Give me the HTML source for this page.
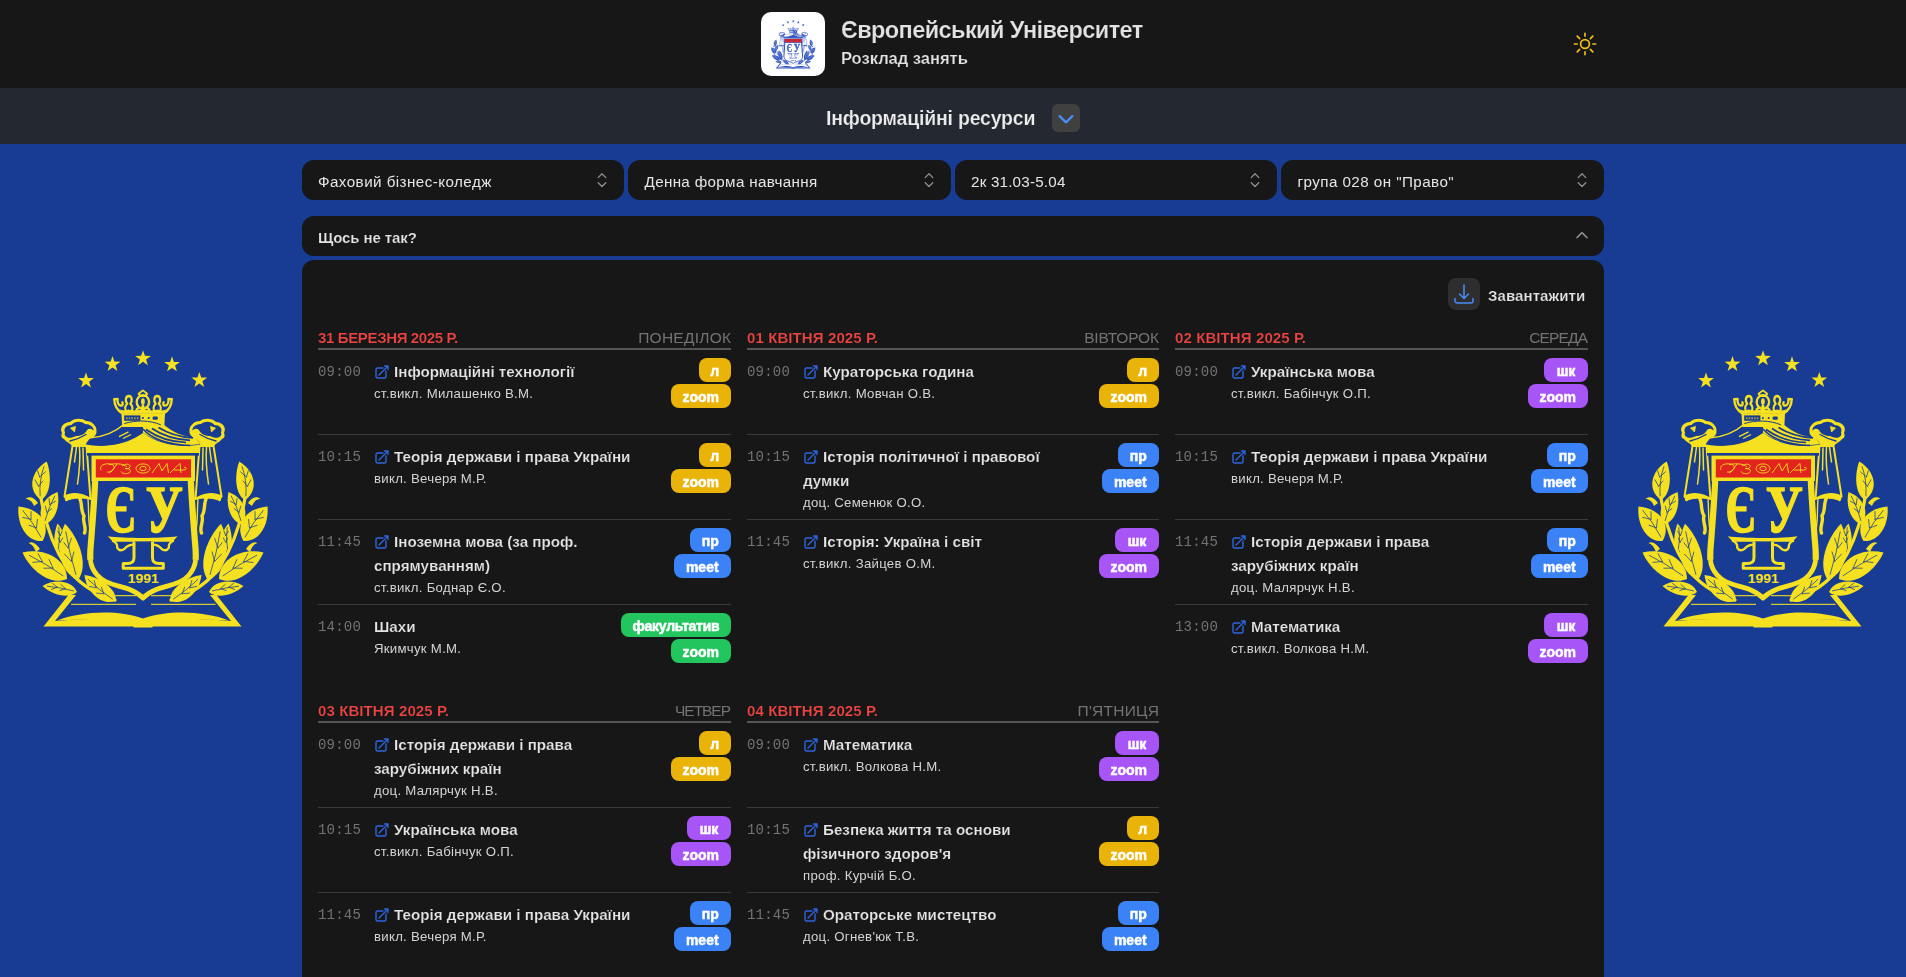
<!DOCTYPE html>
<html lang="uk">
<head>
<meta charset="utf-8">
<title>Розклад занять</title>
<style>
*{box-sizing:border-box}
html,body{margin:0;padding:0}
body{width:1906px;height:977px;overflow:hidden;position:relative;background:#183c93;font-family:"Liberation Sans",sans-serif;color:#e5e5e5}
.abs{position:absolute}
.day,.hdr,.sub,.sel,.acc,.dlt{will-change:transform}
.h1,.h2,.tt,.dt,.acc,.dlt{-webkit-text-stroke:0.2px #171717}
.subt{-webkit-text-stroke:0.2px #242831}
.hdr{position:absolute;left:0;top:0;width:1906px;height:88px;background:#171717}
.logo{position:absolute;left:761px;top:12px;width:64px;height:64px;border-radius:10px;background:#fff;overflow:hidden}
.h1{position:absolute;left:841px;top:14.6px;font-size:23.5px;line-height:30px;font-weight:bold;color:#e2e2e2;white-space:nowrap;letter-spacing:-0.58px}
.h2{position:absolute;left:841px;top:47px;font-size:16.6px;line-height:24px;font-weight:bold;color:#e2e2e2;white-space:nowrap;letter-spacing:-0.05px}
.sun{position:absolute;left:1571px;top:30px;width:28px;height:28px}
.sub{position:absolute;left:0;top:88px;width:1906px;height:56px;background:#242831}
.subt{position:absolute;left:826px;top:16.2px;font-size:19.5px;line-height:28px;font-weight:bold;color:#ececec;white-space:nowrap;letter-spacing:-0.2px}
.subb{position:absolute;left:1052px;top:16px;width:28px;height:28px;border-radius:6px;background:#404040}
.sel{position:absolute;top:160px;width:322.5px;height:40px;border-radius:12px;background:#171717;font-size:15.2px;line-height:43px;padding-left:16px;color:#e5e5e5;white-space:nowrap;letter-spacing:0.44px;overflow:hidden}
.sel svg{position:absolute;right:14px;top:12px}
.acc{position:absolute;left:302px;top:216px;width:1302px;height:40px;border-radius:12px;background:#171717;font-size:15px;line-height:43.4px;padding-left:16px;font-weight:bold;color:#e5e5e5;letter-spacing:-0.1px;overflow:hidden}
.acc svg{position:absolute;right:14px;top:12px}
.main{position:absolute;left:302px;top:260px;width:1302px;height:730px;border-radius:12px 12px 0 0;background:#171717}
.dl{position:absolute;left:1448px;top:278px;width:32px;height:32px;border-radius:8px;background:#2e2e30}
.dlt{position:absolute;left:1488px;top:285.7px;letter-spacing:0.1px;font-size:15px;line-height:20px;font-weight:bold;color:#e5e5e5;white-space:nowrap}
.day{position:absolute}
.dh{height:26px;border-bottom:2px solid #555;display:flex;justify-content:space-between;align-items:flex-start;font-size:15px;line-height:24px;white-space:nowrap;padding-top:1.5px}
.dt{color:#ef4444;font-weight:bold;letter-spacing:-0.36px}
.dn{color:#737373;font-size:15.5px;letter-spacing:0.25px;margin-right:-0.25px}
.row{position:relative;height:85px;border-bottom:1px solid #3a3a3a}
.row:last-child{border-bottom:none}
.tm{position:absolute;left:0;top:10px;font-family:"Liberation Mono",monospace;font-size:14px;line-height:24px;color:#737373;letter-spacing:0.2px}
.tx{position:absolute;left:56px;top:9.6px;white-space:nowrap}
.tt{font-size:15.2px;line-height:24px;font-weight:bold;color:#e5e5e5;letter-spacing:0px}
.lk{display:inline-block;vertical-align:-3.4px;margin-right:4px}
.tc{font-size:13.2px;line-height:20px;color:#d4d4d4;letter-spacing:0.28px}
.bd{position:absolute;right:0;top:8px;display:flex;flex-direction:column;align-items:flex-end;gap:2px}
.bg{display:block;height:24px;border-radius:8px;text-align:center;font-size:14px;line-height:26.4px;font-weight:bold;color:#fff;white-space:nowrap;overflow:hidden;-webkit-text-stroke:0.5px #fff}
.w-f{letter-spacing:-0.25px}.w-l{width:32.5px}.w-z{width:60.5px}.w-p{width:41.5px}.w-m{width:57.5px}.w-s{width:44px}.w-f{width:110px}
.y{background:#eab308}.b{background:#3b82f6}.p{background:#a855f7}.g{background:#22c55e}
.emb{position:absolute}
</style>
</head>
<body>
<div class="hdr">
  <div class="logo"><svg style="position:absolute;left:6.76px;top:6px" width="51.2" height="52.95"><use href="#emb2"/></svg></div>
  <div class="h1">Європейський Університет</div>
  <div class="h2">Розклад занять</div>
  <svg class="sun" viewBox="-14 -14 28 28"><g fill="none" stroke="#eebf1c" stroke-width="1.7" stroke-linecap="round"><circle r="4.4"/><path d="M0-7.9V-10.6M0 7.9V10.6M-7.9 0H-10.6M7.9 0H10.6M5.37-5.37L7.78-7.78M-5.37-5.37L-7.78-7.78M5.37 5.37L7.78 7.78M-5.37 5.37L-7.78 7.78"/></g></svg>
</div>
<div class="sub">
  <div class="subt">Інформаційні ресурси</div>
  <div class="subb"><svg width="28" height="28" viewBox="0 0 28 28"><path d="M7.6 12.1L14 18.4L20.4 12.1" fill="none" stroke="#4a8ff7" stroke-width="2.2" stroke-linecap="round" stroke-linejoin="round"/></svg></div>
</div>
<div class="sel" style="left:302px;width:322px">Фаховий бізнес-коледж<svg width="16" height="16" viewBox="0 0 16 16"><path d="M4.2 5.6L8 1.8L11.8 5.6M4.2 10.7L8 14.5L11.8 10.7" fill="none" stroke="#8f8f8f" stroke-width="1.3" stroke-linecap="round" stroke-linejoin="round"/></svg></div>
<div class="sel" style="left:628px;width:323px;letter-spacing:0.34px;padding-left:16.5px">Денна форма навчання<svg width="16" height="16" viewBox="0 0 16 16"><path d="M4.2 5.6L8 1.8L11.8 5.6M4.2 10.7L8 14.5L11.8 10.7" fill="none" stroke="#8f8f8f" stroke-width="1.3" stroke-linecap="round" stroke-linejoin="round"/></svg></div>
<div class="sel" style="left:955px;width:322px;letter-spacing:0.2px">2к 31.03-5.04<svg width="16" height="16" viewBox="0 0 16 16"><path d="M4.2 5.6L8 1.8L11.8 5.6M4.2 10.7L8 14.5L11.8 10.7" fill="none" stroke="#8f8f8f" stroke-width="1.3" stroke-linecap="round" stroke-linejoin="round"/></svg></div>
<div class="sel" style="left:1281px;width:323px;padding-left:16.5px">група 028 он "Право"<svg width="16" height="16" viewBox="0 0 16 16"><path d="M4.2 5.6L8 1.8L11.8 5.6M4.2 10.7L8 14.5L11.8 10.7" fill="none" stroke="#8f8f8f" stroke-width="1.3" stroke-linecap="round" stroke-linejoin="round"/></svg></div>
<div class="acc">Щось не так?<svg width="16" height="16" viewBox="0 0 16 16"><path d="M3 9.6L8 4.6L13 9.6" fill="none" stroke="#8a8a8a" stroke-width="1.5" stroke-linecap="round" stroke-linejoin="round"/></svg></div>
<div class="main"></div>
<div class="dl"><svg width="32" height="32" viewBox="-4 -4 32 32"><path d="M3 16.5v2.25A2.25 2.25 0 0 0 5.25 21h13.5A2.25 2.25 0 0 0 21 18.75V16.5M16.5 12L12 16.5m0 0L7.5 12m4.5 4.5V3" fill="none" stroke="#4a8df6" stroke-width="1.5" stroke-linecap="round" stroke-linejoin="round"/></svg></div>
<div class="dlt">Завантажити</div>
<div class="day" style="left:318px;top:324px;width:413px">
<div class="dh"><span class="dt" style="letter-spacing:-0.36px">31 БЕРЕЗНЯ 2025 Р.</span><span class="dn" style="letter-spacing:0.25px;margin-right:-0.25px">ПОНЕДІЛОК</span></div>
<div class="row"><span class="tm">09:00</span><div class="tx"><div class="tt"><svg class="lk" viewBox="0 0 24 24" width="16" height="16"><path d="M13.5 6H5.25A2.25 2.25 0 0 0 3 8.25v10.5A2.25 2.25 0 0 0 5.25 21h10.5A2.25 2.25 0 0 0 18 18.75V10.5m-10.5 6L21 3m0 0h-5.25M21 3v5.25" fill="none" stroke="#2f64e0" stroke-width="2.1" stroke-linecap="round" stroke-linejoin="round"/></svg><span class="tl">Інформаційні технології</span></div><div class="tc">ст.викл. Милашенко В.М.</div></div><div class="bd"><span class="bg y w-l">л</span><span class="bg y w-z">zoom</span></div></div>
<div class="row"><span class="tm">10:15</span><div class="tx"><div class="tt"><svg class="lk" viewBox="0 0 24 24" width="16" height="16"><path d="M13.5 6H5.25A2.25 2.25 0 0 0 3 8.25v10.5A2.25 2.25 0 0 0 5.25 21h10.5A2.25 2.25 0 0 0 18 18.75V10.5m-10.5 6L21 3m0 0h-5.25M21 3v5.25" fill="none" stroke="#2f64e0" stroke-width="2.1" stroke-linecap="round" stroke-linejoin="round"/></svg><span class="tl">Теорія держави і права України</span></div><div class="tc">викл. Вечеря М.Р.</div></div><div class="bd"><span class="bg y w-l">л</span><span class="bg y w-z">zoom</span></div></div>
<div class="row"><span class="tm">11:45</span><div class="tx"><div class="tt"><svg class="lk" viewBox="0 0 24 24" width="16" height="16"><path d="M13.5 6H5.25A2.25 2.25 0 0 0 3 8.25v10.5A2.25 2.25 0 0 0 5.25 21h10.5A2.25 2.25 0 0 0 18 18.75V10.5m-10.5 6L21 3m0 0h-5.25M21 3v5.25" fill="none" stroke="#2f64e0" stroke-width="2.1" stroke-linecap="round" stroke-linejoin="round"/></svg><span class="tl">Іноземна мова (за проф.<br>спрямуванням)</span></div><div class="tc">ст.викл. Боднар Є.О.</div></div><div class="bd"><span class="bg b w-p">пр</span><span class="bg b w-m">meet</span></div></div>
<div class="row"><span class="tm">14:00</span><div class="tx"><div class="tt"><span class="tl">Шахи</span></div><div class="tc">Якимчук М.М.</div></div><div class="bd"><span class="bg g w-f">факультатив</span><span class="bg g w-z">zoom</span></div></div>
</div>
<div class="day" style="left:747px;top:324px;width:412px">
<div class="dh"><span class="dt" style="letter-spacing:0.10px">01 КВІТНЯ 2025 Р.</span><span class="dn" style="letter-spacing:-0.14px;margin-right:0.14px">ВІВТОРОК</span></div>
<div class="row"><span class="tm">09:00</span><div class="tx"><div class="tt"><svg class="lk" viewBox="0 0 24 24" width="16" height="16"><path d="M13.5 6H5.25A2.25 2.25 0 0 0 3 8.25v10.5A2.25 2.25 0 0 0 5.25 21h10.5A2.25 2.25 0 0 0 18 18.75V10.5m-10.5 6L21 3m0 0h-5.25M21 3v5.25" fill="none" stroke="#2f64e0" stroke-width="2.1" stroke-linecap="round" stroke-linejoin="round"/></svg><span class="tl">Кураторська година</span></div><div class="tc">ст.викл. Мовчан О.В.</div></div><div class="bd"><span class="bg y w-l">л</span><span class="bg y w-z">zoom</span></div></div>
<div class="row"><span class="tm">10:15</span><div class="tx"><div class="tt"><svg class="lk" viewBox="0 0 24 24" width="16" height="16"><path d="M13.5 6H5.25A2.25 2.25 0 0 0 3 8.25v10.5A2.25 2.25 0 0 0 5.25 21h10.5A2.25 2.25 0 0 0 18 18.75V10.5m-10.5 6L21 3m0 0h-5.25M21 3v5.25" fill="none" stroke="#2f64e0" stroke-width="2.1" stroke-linecap="round" stroke-linejoin="round"/></svg><span class="tl">Історія політичної і правової<br>думки</span></div><div class="tc">доц. Семенюк О.О.</div></div><div class="bd"><span class="bg b w-p">пр</span><span class="bg b w-m">meet</span></div></div>
<div class="row"><span class="tm">11:45</span><div class="tx"><div class="tt"><svg class="lk" viewBox="0 0 24 24" width="16" height="16"><path d="M13.5 6H5.25A2.25 2.25 0 0 0 3 8.25v10.5A2.25 2.25 0 0 0 5.25 21h10.5A2.25 2.25 0 0 0 18 18.75V10.5m-10.5 6L21 3m0 0h-5.25M21 3v5.25" fill="none" stroke="#2f64e0" stroke-width="2.1" stroke-linecap="round" stroke-linejoin="round"/></svg><span class="tl">Історія: Україна і світ</span></div><div class="tc">ст.викл. Зайцев О.М.</div></div><div class="bd"><span class="bg p w-s">шк</span><span class="bg p w-z">zoom</span></div></div>
</div>
<div class="day" style="left:1175px;top:324px;width:413px">
<div class="dh"><span class="dt" style="letter-spacing:0.10px">02 КВІТНЯ 2025 Р.</span><span class="dn" style="letter-spacing:-0.85px;margin-right:0.85px">СЕРЕДА</span></div>
<div class="row"><span class="tm">09:00</span><div class="tx"><div class="tt"><svg class="lk" viewBox="0 0 24 24" width="16" height="16"><path d="M13.5 6H5.25A2.25 2.25 0 0 0 3 8.25v10.5A2.25 2.25 0 0 0 5.25 21h10.5A2.25 2.25 0 0 0 18 18.75V10.5m-10.5 6L21 3m0 0h-5.25M21 3v5.25" fill="none" stroke="#2f64e0" stroke-width="2.1" stroke-linecap="round" stroke-linejoin="round"/></svg><span class="tl">Українська мова</span></div><div class="tc">ст.викл. Бабінчук О.П.</div></div><div class="bd"><span class="bg p w-s">шк</span><span class="bg p w-z">zoom</span></div></div>
<div class="row"><span class="tm">10:15</span><div class="tx"><div class="tt"><svg class="lk" viewBox="0 0 24 24" width="16" height="16"><path d="M13.5 6H5.25A2.25 2.25 0 0 0 3 8.25v10.5A2.25 2.25 0 0 0 5.25 21h10.5A2.25 2.25 0 0 0 18 18.75V10.5m-10.5 6L21 3m0 0h-5.25M21 3v5.25" fill="none" stroke="#2f64e0" stroke-width="2.1" stroke-linecap="round" stroke-linejoin="round"/></svg><span class="tl">Теорія держави і права України</span></div><div class="tc">викл. Вечеря М.Р.</div></div><div class="bd"><span class="bg b w-p">пр</span><span class="bg b w-m">meet</span></div></div>
<div class="row"><span class="tm">11:45</span><div class="tx"><div class="tt"><svg class="lk" viewBox="0 0 24 24" width="16" height="16"><path d="M13.5 6H5.25A2.25 2.25 0 0 0 3 8.25v10.5A2.25 2.25 0 0 0 5.25 21h10.5A2.25 2.25 0 0 0 18 18.75V10.5m-10.5 6L21 3m0 0h-5.25M21 3v5.25" fill="none" stroke="#2f64e0" stroke-width="2.1" stroke-linecap="round" stroke-linejoin="round"/></svg><span class="tl">Історія держави і права<br>зарубіжних країн</span></div><div class="tc">доц. Малярчук Н.В.</div></div><div class="bd"><span class="bg b w-p">пр</span><span class="bg b w-m">meet</span></div></div>
<div class="row"><span class="tm">13:00</span><div class="tx"><div class="tt"><svg class="lk" viewBox="0 0 24 24" width="16" height="16"><path d="M13.5 6H5.25A2.25 2.25 0 0 0 3 8.25v10.5A2.25 2.25 0 0 0 5.25 21h10.5A2.25 2.25 0 0 0 18 18.75V10.5m-10.5 6L21 3m0 0h-5.25M21 3v5.25" fill="none" stroke="#2f64e0" stroke-width="2.1" stroke-linecap="round" stroke-linejoin="round"/></svg><span class="tl">Математика</span></div><div class="tc">ст.викл. Волкова Н.М.</div></div><div class="bd"><span class="bg p w-s">шк</span><span class="bg p w-z">zoom</span></div></div>
</div>
<div class="day" style="left:318px;top:697px;width:413px">
<div class="dh"><span class="dt" style="letter-spacing:0.10px">03 КВІТНЯ 2025 Р.</span><span class="dn" style="letter-spacing:-1.05px;margin-right:1.05px">ЧЕТВЕР</span></div>
<div class="row"><span class="tm">09:00</span><div class="tx"><div class="tt"><svg class="lk" viewBox="0 0 24 24" width="16" height="16"><path d="M13.5 6H5.25A2.25 2.25 0 0 0 3 8.25v10.5A2.25 2.25 0 0 0 5.25 21h10.5A2.25 2.25 0 0 0 18 18.75V10.5m-10.5 6L21 3m0 0h-5.25M21 3v5.25" fill="none" stroke="#2f64e0" stroke-width="2.1" stroke-linecap="round" stroke-linejoin="round"/></svg><span class="tl">Історія держави і права<br>зарубіжних країн</span></div><div class="tc">доц. Малярчук Н.В.</div></div><div class="bd"><span class="bg y w-l">л</span><span class="bg y w-z">zoom</span></div></div>
<div class="row"><span class="tm">10:15</span><div class="tx"><div class="tt"><svg class="lk" viewBox="0 0 24 24" width="16" height="16"><path d="M13.5 6H5.25A2.25 2.25 0 0 0 3 8.25v10.5A2.25 2.25 0 0 0 5.25 21h10.5A2.25 2.25 0 0 0 18 18.75V10.5m-10.5 6L21 3m0 0h-5.25M21 3v5.25" fill="none" stroke="#2f64e0" stroke-width="2.1" stroke-linecap="round" stroke-linejoin="round"/></svg><span class="tl">Українська мова</span></div><div class="tc">ст.викл. Бабінчук О.П.</div></div><div class="bd"><span class="bg p w-s">шк</span><span class="bg p w-z">zoom</span></div></div>
<div class="row"><span class="tm">11:45</span><div class="tx"><div class="tt"><svg class="lk" viewBox="0 0 24 24" width="16" height="16"><path d="M13.5 6H5.25A2.25 2.25 0 0 0 3 8.25v10.5A2.25 2.25 0 0 0 5.25 21h10.5A2.25 2.25 0 0 0 18 18.75V10.5m-10.5 6L21 3m0 0h-5.25M21 3v5.25" fill="none" stroke="#2f64e0" stroke-width="2.1" stroke-linecap="round" stroke-linejoin="round"/></svg><span class="tl">Теорія держави і права України</span></div><div class="tc">викл. Вечеря М.Р.</div></div><div class="bd"><span class="bg b w-p">пр</span><span class="bg b w-m">meet</span></div></div>
</div>
<div class="day" style="left:747px;top:697px;width:412px">
<div class="dh"><span class="dt" style="letter-spacing:0.10px">04 КВІТНЯ 2025 Р.</span><span class="dn" style="letter-spacing:0.25px;margin-right:-0.25px">П'ЯТНИЦЯ</span></div>
<div class="row"><span class="tm">09:00</span><div class="tx"><div class="tt"><svg class="lk" viewBox="0 0 24 24" width="16" height="16"><path d="M13.5 6H5.25A2.25 2.25 0 0 0 3 8.25v10.5A2.25 2.25 0 0 0 5.25 21h10.5A2.25 2.25 0 0 0 18 18.75V10.5m-10.5 6L21 3m0 0h-5.25M21 3v5.25" fill="none" stroke="#2f64e0" stroke-width="2.1" stroke-linecap="round" stroke-linejoin="round"/></svg><span class="tl">Математика</span></div><div class="tc">ст.викл. Волкова Н.М.</div></div><div class="bd"><span class="bg p w-s">шк</span><span class="bg p w-z">zoom</span></div></div>
<div class="row"><span class="tm">10:15</span><div class="tx"><div class="tt"><svg class="lk" viewBox="0 0 24 24" width="16" height="16"><path d="M13.5 6H5.25A2.25 2.25 0 0 0 3 8.25v10.5A2.25 2.25 0 0 0 5.25 21h10.5A2.25 2.25 0 0 0 18 18.75V10.5m-10.5 6L21 3m0 0h-5.25M21 3v5.25" fill="none" stroke="#2f64e0" stroke-width="2.1" stroke-linecap="round" stroke-linejoin="round"/></svg><span class="tl">Безпека життя та основи<br>фізичного здоров'я</span></div><div class="tc">проф. Курчій Б.О.</div></div><div class="bd"><span class="bg y w-l">л</span><span class="bg y w-z">zoom</span></div></div>
<div class="row"><span class="tm">11:45</span><div class="tx"><div class="tt"><svg class="lk" viewBox="0 0 24 24" width="16" height="16"><path d="M13.5 6H5.25A2.25 2.25 0 0 0 3 8.25v10.5A2.25 2.25 0 0 0 5.25 21h10.5A2.25 2.25 0 0 0 18 18.75V10.5m-10.5 6L21 3m0 0h-5.25M21 3v5.25" fill="none" stroke="#2f64e0" stroke-width="2.1" stroke-linecap="round" stroke-linejoin="round"/></svg><span class="tl">Ораторське мистецтво</span></div><div class="tc">доц. Огнев'юк Т.В.</div></div><div class="bd"><span class="bg b w-p">пр</span><span class="bg b w-m">meet</span></div></div>
</div>
<svg width="0" height="0" style="position:absolute"><symbol id="emb" viewBox="0 340 290 300"><g fill="#f5e11f"><polygon points="86.0,372.4 87.9,378.0 93.9,378.1 89.1,381.7 90.9,387.4 86.0,384.0 81.1,387.4 82.9,381.7 78.1,378.1 84.1,378.0"/><polygon points="112.5,356.0 114.4,361.6 120.4,361.7 115.6,365.3 117.4,371.0 112.5,367.6 107.6,371.0 109.4,365.3 104.6,361.7 110.6,361.6"/><polygon points="143.0,350.2 144.9,355.8 150.9,355.9 146.1,359.5 147.9,365.2 143.0,361.8 138.1,365.2 139.9,359.5 135.1,355.9 141.1,355.8"/><polygon points="172.0,356.3 173.9,361.9 179.9,362.0 175.1,365.6 176.9,371.3 172.0,367.9 167.1,371.3 168.9,365.6 164.1,362.0 170.1,361.9"/><polygon points="199.3,371.9 201.2,377.5 207.2,377.6 202.4,381.2 204.2,386.9 199.3,383.5 194.4,386.9 196.2,381.2 191.4,377.6 197.4,377.5"/><path d="M115,600 C95,594 78,584 66,566 C54,548 46,528 41,498" fill="none" stroke="#f5e11f" stroke-width="3.2" stroke-linecap="round"/><path d="M41.0,500.0 C51.7,493.7 51.4,474.0 46.8,461.5 C30.7,470.9 26.8,490.0 41.0,500.0Z"/><path d="M40.1,495.9 Q39.0,480.0 43.9,466.6 M38.6,486.3 L42.8,481.0 M38.6,486.3 L35.0,479.8 M39.6,476.9 L45.4,471.9 M39.6,476.9 L37.6,470.7" fill="none" stroke="#183c93" stroke-width="0.75" stroke-linecap="round"/><path d="M44.5,524.0 C56.1,521.3 60.3,504.3 57.5,492.0 C43.1,497.3 35.4,512.8 44.5,524.0Z"/><path d="M45.1,520.5 Q48.7,507.1 54.7,496.1 M46.9,512.3 L51.8,508.7 M46.9,512.3 L45.3,506.1 M49.8,504.5 L55.5,501.3 M49.8,504.5 L49.0,498.6" fill="none" stroke="#183c93" stroke-width="0.75" stroke-linecap="round"/><path d="M42.5,541.0 C52.4,523.9 38.6,507.8 18.5,506.5 C16.7,523.1 25.9,542.3 42.5,541.0Z"/><path d="M40.9,537.0 Q33.0,522.0 22.9,510.6 M36.5,527.8 L37.4,519.5 M36.5,527.8 L29.0,525.3 M31.0,519.3 L31.0,511.6 M31.0,519.3 L22.7,517.4" fill="none" stroke="#183c93" stroke-width="0.75" stroke-linecap="round"/><path d="M78.0,580.0 C89.0,565.6 79.4,538.2 65.0,523.7 C54.5,543.9 59.0,572.5 78.0,580.0Z"/><path d="M75.9,574.5 Q69.1,552.4 65.8,531.8 M71.4,561.4 L73.9,551.9 M71.4,561.4 L64.5,554.1 M68.1,547.9 L71.4,538.2 M68.1,547.9 L62.0,540.4" fill="none" stroke="#183c93" stroke-width="0.75" stroke-linecap="round"/><path d="M57.5,552.0 C66.3,546.3 65.7,532.0 57.5,523.5 C54.1,532.0 52.3,546.3 57.5,552.0Z"/><path d="M58.4,549.1 Q60.5,537.8 58.8,527.5 M60.1,542.3 L62.7,538.0 M60.1,542.3 L58.3,538.0 M60.4,535.5 L62.0,531.2 M60.4,535.5 L57.6,531.2" fill="none" stroke="#183c93" stroke-width="0.75" stroke-linecap="round"/><path d="M67.0,579.0 C67.1,558.6 43.7,547.3 22.5,552.5 C30.1,570.2 50.6,586.3 67.0,579.0Z"/><path d="M62.9,575.7 Q46.0,563.6 29.3,555.3 M53.0,568.1 L49.1,559.5 M53.0,568.1 L43.9,568.2 M42.4,561.5 L38.1,553.7 M42.4,561.5 L32.9,562.4" fill="none" stroke="#183c93" stroke-width="0.75" stroke-linecap="round"/><path d="M77.0,592.0 C71.9,580.3 54.4,578.6 42.5,586.0 C51.7,594.6 68.6,599.6 77.0,592.0Z"/><path d="M73.6,590.9 Q60.0,587.5 47.4,586.2 M65.5,588.7 L60.9,584.5 M65.5,588.7 L59.8,590.6 M57.2,587.1 L52.5,583.5 M57.2,587.1 L51.5,589.5" fill="none" stroke="#183c93" stroke-width="0.75" stroke-linecap="round"/><path d="M116.0,601.0 C116.3,587.8 98.9,576.8 84.5,575.0 C86.4,592.0 101.2,606.1 116.0,601.0Z"/><path d="M112.4,599.0 Q98.7,589.9 88.2,579.5 M103.9,593.8 L101.4,587.3 M103.9,593.8 L96.6,593.1 M96.2,587.8 L94.2,580.6 M96.2,587.8 L89.4,586.4" fill="none" stroke="#183c93" stroke-width="0.75" stroke-linecap="round"/><path d="M38,503 C34,497 29,496 25.5,499 C29,499 32,501 34,506Z"/><path d="M40,549 C36,543 32,541 28.5,543 C32,544 34,547 36,552Z"/><g transform="translate(286,0) scale(-1,1)"><path d="M115,600 C95,594 78,584 66,566 C54,548 46,528 41,498" fill="none" stroke="#f5e11f" stroke-width="3.2" stroke-linecap="round"/><path d="M41.0,500.0 C51.7,493.7 51.4,474.0 46.8,461.5 C30.7,470.9 26.8,490.0 41.0,500.0Z"/><path d="M40.1,495.9 Q39.0,480.0 43.9,466.6 M38.6,486.3 L42.8,481.0 M38.6,486.3 L35.0,479.8 M39.6,476.9 L45.4,471.9 M39.6,476.9 L37.6,470.7" fill="none" stroke="#183c93" stroke-width="0.75" stroke-linecap="round"/><path d="M44.5,524.0 C56.1,521.3 60.3,504.3 57.5,492.0 C43.1,497.3 35.4,512.8 44.5,524.0Z"/><path d="M45.1,520.5 Q48.7,507.1 54.7,496.1 M46.9,512.3 L51.8,508.7 M46.9,512.3 L45.3,506.1 M49.8,504.5 L55.5,501.3 M49.8,504.5 L49.0,498.6" fill="none" stroke="#183c93" stroke-width="0.75" stroke-linecap="round"/><path d="M42.5,541.0 C52.4,523.9 38.6,507.8 18.5,506.5 C16.7,523.1 25.9,542.3 42.5,541.0Z"/><path d="M40.9,537.0 Q33.0,522.0 22.9,510.6 M36.5,527.8 L37.4,519.5 M36.5,527.8 L29.0,525.3 M31.0,519.3 L31.0,511.6 M31.0,519.3 L22.7,517.4" fill="none" stroke="#183c93" stroke-width="0.75" stroke-linecap="round"/><path d="M78.0,580.0 C89.0,565.6 79.4,538.2 65.0,523.7 C54.5,543.9 59.0,572.5 78.0,580.0Z"/><path d="M75.9,574.5 Q69.1,552.4 65.8,531.8 M71.4,561.4 L73.9,551.9 M71.4,561.4 L64.5,554.1 M68.1,547.9 L71.4,538.2 M68.1,547.9 L62.0,540.4" fill="none" stroke="#183c93" stroke-width="0.75" stroke-linecap="round"/><path d="M57.5,552.0 C66.3,546.3 65.7,532.0 57.5,523.5 C54.1,532.0 52.3,546.3 57.5,552.0Z"/><path d="M58.4,549.1 Q60.5,537.8 58.8,527.5 M60.1,542.3 L62.7,538.0 M60.1,542.3 L58.3,538.0 M60.4,535.5 L62.0,531.2 M60.4,535.5 L57.6,531.2" fill="none" stroke="#183c93" stroke-width="0.75" stroke-linecap="round"/><path d="M67.0,579.0 C67.1,558.6 43.7,547.3 22.5,552.5 C30.1,570.2 50.6,586.3 67.0,579.0Z"/><path d="M62.9,575.7 Q46.0,563.6 29.3,555.3 M53.0,568.1 L49.1,559.5 M53.0,568.1 L43.9,568.2 M42.4,561.5 L38.1,553.7 M42.4,561.5 L32.9,562.4" fill="none" stroke="#183c93" stroke-width="0.75" stroke-linecap="round"/><path d="M77.0,592.0 C71.9,580.3 54.4,578.6 42.5,586.0 C51.7,594.6 68.6,599.6 77.0,592.0Z"/><path d="M73.6,590.9 Q60.0,587.5 47.4,586.2 M65.5,588.7 L60.9,584.5 M65.5,588.7 L59.8,590.6 M57.2,587.1 L52.5,583.5 M57.2,587.1 L51.5,589.5" fill="none" stroke="#183c93" stroke-width="0.75" stroke-linecap="round"/><path d="M116.0,601.0 C116.3,587.8 98.9,576.8 84.5,575.0 C86.4,592.0 101.2,606.1 116.0,601.0Z"/><path d="M112.4,599.0 Q98.7,589.9 88.2,579.5 M103.9,593.8 L101.4,587.3 M103.9,593.8 L96.6,593.1 M96.2,587.8 L94.2,580.6 M96.2,587.8 L89.4,586.4" fill="none" stroke="#183c93" stroke-width="0.75" stroke-linecap="round"/><path d="M38,503 C34,497 29,496 25.5,499 C29,499 32,501 34,506Z"/><path d="M40,549 C36,543 32,541 28.5,543 C32,544 34,547 36,552Z"/></g><path d="M68.5,595 L43.5,626.6 L133.5,626.6 L133.5,627.4 L152.5,627.4 L152.5,626.6 L241.5,626.6 L216.5,595 L210,595 L231,621 C200,619 170,617 143,620.5 C116,617 86,619 55,621 L76,595Z"/><path d="M57,620.5 C80,612 115,609 143,618.5 C171,609 206,612 229,620.5 C200,619 168,618 143,622 C118,618 86,619 57,620.5Z"/><path d="M71,604.4 H136 M151,604.4 H215.5 M113,595.6 H136 M151,595.6 H172" stroke="#f5e11f" stroke-opacity="0.85" stroke-width="1.3" fill="none"/><path d="M62,433 C59,427 64,422 70,422 C74,418 82,418 86,421 C92,421 97,426 96.5,431 C97,435 93,438 90,438.5 C88,441 86,443 85,446 L72,446 C70,443 66,442 64,439 C61,438 61,435 62,433Z" fill="#f5e11f"/><path d="M65,432.5 C63,428 67,425 71.5,425 C75,421 81,421 85,424 C90,424 94,427 93.5,430.5 C91,428 88,428.5 86.5,431 C85,434 80,436 76,436 C72,438 68,438.5 66,436.5 C64.5,435.5 64.5,434 65,432.5Z" fill="#183c93"/><path d="M70.5,428 L75.5,426.5 L74.5,432Z M88,430 C90,429 92,430 92,432 C91,434 89,434 88,433" fill="#f5e11f" stroke="#f5e11f" stroke-width="0.8"/><path d="M70,441 C76,439.5 82,437 86,434.5" fill="none" stroke="#183c93" stroke-width="1.3" stroke-linecap="round"/><path d="M72.5,446 L64.5,496.5 C72,492.5 82,493.5 90.5,499 L86.5,446Z" fill="#183c93" stroke="#f5e11f" stroke-width="2" stroke-linejoin="round"/><path d="M76.5,447 L74.5,462 M79.5,447 C80.5,460 79,474 77.5,484 M83,448 L83.5,470" fill="none" stroke="#f5e11f" stroke-width="1.5" stroke-linecap="round"/><path d="M64.5,496.5 C72,492.5 82,493.5 90.5,499 C82,497.5 72,497.5 66,501Z" stroke="#f5e11f" stroke-width="1"/><path d="M79,497 C83,503 80,510 84,516 C82,522 87,527 84.5,533" fill="none" stroke="#f5e11f" stroke-width="3.4" stroke-linecap="round"/><path d="M88,499 C89,510 88,520 90,530" fill="none" stroke="#f5e11f" stroke-width="1.4" stroke-linecap="round"/><g transform="translate(286,0) scale(-1,1)"><path d="M62,433 C59,427 64,422 70,422 C74,418 82,418 86,421 C92,421 97,426 96.5,431 C97,435 93,438 90,438.5 C88,441 86,443 85,446 L72,446 C70,443 66,442 64,439 C61,438 61,435 62,433Z" fill="#f5e11f"/><path d="M65,432.5 C63,428 67,425 71.5,425 C75,421 81,421 85,424 C90,424 94,427 93.5,430.5 C91,428 88,428.5 86.5,431 C85,434 80,436 76,436 C72,438 68,438.5 66,436.5 C64.5,435.5 64.5,434 65,432.5Z" fill="#183c93"/><path d="M70.5,428 L75.5,426.5 L74.5,432Z M88,430 C90,429 92,430 92,432 C91,434 89,434 88,433" fill="#f5e11f" stroke="#f5e11f" stroke-width="0.8"/><path d="M70,441 C76,439.5 82,437 86,434.5" fill="none" stroke="#183c93" stroke-width="1.3" stroke-linecap="round"/><path d="M72.5,446 L64.5,496.5 C72,492.5 82,493.5 90.5,499 L86.5,446Z" fill="#183c93" stroke="#f5e11f" stroke-width="2" stroke-linejoin="round"/><path d="M76.5,447 L74.5,462 M79.5,447 C80.5,460 79,474 77.5,484 M83,448 L83.5,470" fill="none" stroke="#f5e11f" stroke-width="1.5" stroke-linecap="round"/><path d="M64.5,496.5 C72,492.5 82,493.5 90.5,499 C82,497.5 72,497.5 66,501Z" stroke="#f5e11f" stroke-width="1"/><path d="M79,497 C83,503 80,510 84,516 C82,522 87,527 84.5,533" fill="none" stroke="#f5e11f" stroke-width="3.4" stroke-linecap="round"/><path d="M88,499 C89,510 88,520 90,530" fill="none" stroke="#f5e11f" stroke-width="1.4" stroke-linecap="round"/></g><path d="M95.5,470 C95.3,490 93,515 91.2,540 C90.5,548 89.8,554 90.4,560 C91,566 93.5,571 97.2,575.2 C100.5,579 103.5,580.8 106.3,581.9 C111,584 115,585.2 119.5,586.4 C123,587.4 126.5,588.3 129.7,589.4 C134,591 139,594 143,598 C147,594 152,591 156.3,589.4 C159.5,588.3 163,587.4 166.5,586.4 C171,585.2 175,584 179.7,581.9 C182.5,580.8 185.5,579 188.8,575.2 C192.5,571 195,566 195.6,560 C196.2,554 195.5,548 194.8,540 C193,515 190.7,490 190.5,470Z" fill="#183c93"/><path d="M90.4,560 C91,566 93.5,571 97.2,575.2 C100.5,579 103.5,580.8 106.3,581.9 C111,584 115,585.2 119.5,586.4 C123,587.4 126.5,588.3 129.7,589.4 C134,591 139,594 143,598 C147,594 152,591 156.3,589.4 C159.5,588.3 163,587.4 166.5,586.4 C171,585.2 175,584 179.7,581.9 C182.5,580.8 185.5,579 188.8,575.2 C192.5,571 195,566 195.6,560" fill="none" stroke="#f5e11f" stroke-width="4.8" stroke-linejoin="round"/><path d="M95.5,470 C95.3,490 93,515 91.2,540 C90.5,548 89.8,554 90.4,560" fill="none" stroke="#f5e11f" stroke-width="6.2"/><path d="M190.5,470 C190.7,490 193,515 194.8,540 C195.5,548 196.2,554 195.6,560" fill="none" stroke="#f5e11f" stroke-width="6.2"/><path d="M82,443.5 C95,447 118,448 137,436.8 L143,433 L149,436.8 C168,448 191,447 204,443.5 L199,447 L199,453 L87,453 L87,447Z"/><path d="M90.5,437.8 C103,437 114,433 123.8,424.5" fill="none" stroke="#f5e11f" stroke-width="1.6"/><path d="M119,436.6 L128.5,431.8 M123,438.5 L131,434.5" fill="none" stroke="#f5e11f" stroke-width="1.3"/><path d="M143,427 L163,424 C172,432 184,437 196,438 L200,444 C180,447 160,443 143,433Z"/><path d="M146,429.5 C158,438 172,442 186,442.5 M152,428.5 C163,436 176,439.5 190,440.3 M158.5,427.5 C168,433.5 180,437 193,438" fill="none" stroke="#183c93" stroke-width="1.7"/><path d="M143,429 C150,437 165,445 190,445.5" fill="none" stroke="#183c93" stroke-width="1.6"/><path d="M121.5,413.2 L165,413.2 L164.3,427 L122.2,427Z"/><g fill="none" stroke="#f5e11f" stroke-width="2.3" stroke-linecap="round" stroke-linejoin="round"><path d="M114.3,399.3 C114.3,405.5 117.5,410.5 122.5,413.5"/><path d="M114.3,399.2 L117.6,399 C117.2,402.5 118.6,405.3 120.8,405.6 C122.6,405.8 123.3,403.5 122.3,402.3"/><path d="M171.7,399.3 C171.7,405.5 168.5,410.5 163.5,413.5"/><path d="M171.7,399.2 L168.4,399 C168.8,402.5 167.4,405.3 165.2,405.6 C163.4,405.8 162.7,403.5 163.7,402.3"/><path d="M126.5,412.5 C124.5,409 125,405.5 127.2,403.8 C124.8,401 125.6,396.2 128.8,396 C132,396.2 132.6,401 130.4,403.8 C132.8,405.8 133,409.5 131,412.5"/><path d="M159.5,412.5 C161.5,409 161,405.5 158.8,403.8 C161.2,401 160.4,396.2 157.2,396 C154,396.2 153.4,401 155.6,403.8 C153.2,405.8 153,409.5 155,412.5"/><ellipse cx="142.9" cy="402" rx="6.2" ry="6.8"/><path d="M136.2,412.6 C136,409.5 137.5,408 139.5,407.6 M149.6,412.6 C149.8,409.5 148.3,408 146.3,407.6"/><path d="M138.6,393.8 L142.9,390.4 L147.2,393.8 L145.2,396.2 L140.6,396.2Z" stroke-width="1.8"/></g><ellipse cx="142.9" cy="401.6" rx="1.9" ry="3.4"/><path d="M141.6,405 L144.2,405 L145.4,413.5 L140.4,413.5Z"/><path d="M118.8,408.8 L123,413.6 L163,413.6 L167.2,408.8 C164,411 160,410.6 157.5,409.6 C153,411 149,410.6 146,409.8 L139.8,409.8 C137,410.6 133,411 128.5,409.6 C126,410.6 122,411 118.8,408.8Z"/><rect x="124.2" y="415.4" width="16.2" height="5.4" fill="#183c93"/><path d="M126,418.2 h12.5" stroke="#f5e11f" stroke-opacity="0.6" stroke-width="2" stroke-dasharray="1.6 1.1" fill="none"/><g fill="#183c93"><circle cx="142.9" cy="418" r="1.05"/><circle cx="148.7" cy="418" r="1.05"/><rect x="152.6" y="416.4" width="5.2" height="3.4" rx="1.4"/></g><path d="M124.3,423.6 C136,419.8 150,420.2 160.8,424.8" fill="none" stroke="#183c93" stroke-width="1"/><rect x="87" y="453" width="112" height="2.6" fill="#183c93"/><rect x="91.5" y="455.6" width="103.5" height="25.4"/><rect x="95.8" y="459.3" width="95.2" height="18.2" fill="#e2231e"/><g fill="none" stroke="#f5e11f" stroke-width="0.9"><path d="M101,470 C99,466 104,463 110,464 C118,465 113,473 107,472 M109,464.5 C118,463 124,464 127,467 M117,464 C114,468 113,471 109,473"/><path d="M122,466 C126,463 131,464 130,467 C129,469 126,469 125,468.5 C130,468 132,471 129,473 C126,474.5 122,473.5 121,471.5"/><ellipse cx="143" cy="468.5" rx="7" ry="4.6"/><ellipse cx="143" cy="468.5" rx="3.2" ry="2.2"/><path d="M152,473 C155,469 157,466 159,463.5 L162,471 L167,463.5 L168.5,473"/><path d="M170,473 C174,469 177,466 180,463.5 L181,473 M173.5,470 H184 C187,470 187,466.5 184,467.5"/></g><text x="120.8" y="532.3" font-family="Liberation Serif,serif" font-weight="bold" font-size="67" stroke="#f5e11f" stroke-width="1.7" text-anchor="middle" textLength="30.5" lengthAdjust="spacingAndGlyphs">Є</text><text x="164.3" y="532.3" font-family="Liberation Serif,serif" font-weight="bold" font-size="67" stroke="#f5e11f" stroke-width="1.7" text-anchor="middle" textLength="37" lengthAdjust="spacingAndGlyphs">У</text><path d="M107.7,536.3 C125,538.6 160,538.6 177.6,536.3 L172.5,541.8 L113,541.8Z"/><path d="M134,541.5 L134,557.5 C134,561.5 131.5,563.6 127.5,563.6 L123.2,563.6 L123.2,568.2 L163.3,568.2 L163.3,563.6 L159,563.6 C155,563.6 152.5,561.5 152.5,557.5 L152.5,541.5" fill="#183c93" stroke="#f5e11f" stroke-width="3" stroke-linejoin="round"/><path d="M113,541 C116,542.3 117.6,544.5 117.2,547.8 C118.8,551 122.8,551 124.8,548.6 C126.8,546 130,544.6 134,544.6 M173,541 C170,542.3 168.4,544.5 168.8,547.8 C167.2,551 163.2,551 161.2,548.6 C159.2,546 156,544.6 152.5,544.6" fill="none" stroke="#f5e11f" stroke-width="2.4" stroke-linecap="round"/><text x="143.2" y="583.3" font-family="Liberation Sans,sans-serif" font-size="13.6" font-weight="bold" text-anchor="middle" textLength="31" lengthAdjust="spacingAndGlyphs">1991</text></g></symbol><symbol id="emb2" viewBox="0 340 290 300"><g fill="#3355c0"><polygon points="86.0,372.4 87.9,378.0 93.9,378.1 89.1,381.7 90.9,387.4 86.0,384.0 81.1,387.4 82.9,381.7 78.1,378.1 84.1,378.0"/><polygon points="112.5,356.0 114.4,361.6 120.4,361.7 115.6,365.3 117.4,371.0 112.5,367.6 107.6,371.0 109.4,365.3 104.6,361.7 110.6,361.6"/><polygon points="143.0,350.2 144.9,355.8 150.9,355.9 146.1,359.5 147.9,365.2 143.0,361.8 138.1,365.2 139.9,359.5 135.1,355.9 141.1,355.8"/><polygon points="172.0,356.3 173.9,361.9 179.9,362.0 175.1,365.6 176.9,371.3 172.0,367.9 167.1,371.3 168.9,365.6 164.1,362.0 170.1,361.9"/><polygon points="199.3,371.9 201.2,377.5 207.2,377.6 202.4,381.2 204.2,386.9 199.3,383.5 194.4,386.9 196.2,381.2 191.4,377.6 197.4,377.5"/><path d="M115,600 C95,594 78,584 66,566 C54,548 46,528 41,498" fill="none" stroke="#3355c0" stroke-width="3.2" stroke-linecap="round"/><path d="M41.0,500.0 C51.7,493.7 51.4,474.0 46.8,461.5 C30.7,470.9 26.8,490.0 41.0,500.0Z"/><path d="M40.1,495.9 Q39.0,480.0 43.9,466.6 M38.6,486.3 L42.8,481.0 M38.6,486.3 L35.0,479.8 M39.6,476.9 L45.4,471.9 M39.6,476.9 L37.6,470.7" fill="none" stroke="#ffffff" stroke-width="0.75" stroke-linecap="round"/><path d="M44.5,524.0 C56.1,521.3 60.3,504.3 57.5,492.0 C43.1,497.3 35.4,512.8 44.5,524.0Z"/><path d="M45.1,520.5 Q48.7,507.1 54.7,496.1 M46.9,512.3 L51.8,508.7 M46.9,512.3 L45.3,506.1 M49.8,504.5 L55.5,501.3 M49.8,504.5 L49.0,498.6" fill="none" stroke="#ffffff" stroke-width="0.75" stroke-linecap="round"/><path d="M42.5,541.0 C52.4,523.9 38.6,507.8 18.5,506.5 C16.7,523.1 25.9,542.3 42.5,541.0Z"/><path d="M40.9,537.0 Q33.0,522.0 22.9,510.6 M36.5,527.8 L37.4,519.5 M36.5,527.8 L29.0,525.3 M31.0,519.3 L31.0,511.6 M31.0,519.3 L22.7,517.4" fill="none" stroke="#ffffff" stroke-width="0.75" stroke-linecap="round"/><path d="M78.0,580.0 C89.0,565.6 79.4,538.2 65.0,523.7 C54.5,543.9 59.0,572.5 78.0,580.0Z"/><path d="M75.9,574.5 Q69.1,552.4 65.8,531.8 M71.4,561.4 L73.9,551.9 M71.4,561.4 L64.5,554.1 M68.1,547.9 L71.4,538.2 M68.1,547.9 L62.0,540.4" fill="none" stroke="#ffffff" stroke-width="0.75" stroke-linecap="round"/><path d="M57.5,552.0 C66.3,546.3 65.7,532.0 57.5,523.5 C54.1,532.0 52.3,546.3 57.5,552.0Z"/><path d="M58.4,549.1 Q60.5,537.8 58.8,527.5 M60.1,542.3 L62.7,538.0 M60.1,542.3 L58.3,538.0 M60.4,535.5 L62.0,531.2 M60.4,535.5 L57.6,531.2" fill="none" stroke="#ffffff" stroke-width="0.75" stroke-linecap="round"/><path d="M67.0,579.0 C67.1,558.6 43.7,547.3 22.5,552.5 C30.1,570.2 50.6,586.3 67.0,579.0Z"/><path d="M62.9,575.7 Q46.0,563.6 29.3,555.3 M53.0,568.1 L49.1,559.5 M53.0,568.1 L43.9,568.2 M42.4,561.5 L38.1,553.7 M42.4,561.5 L32.9,562.4" fill="none" stroke="#ffffff" stroke-width="0.75" stroke-linecap="round"/><path d="M77.0,592.0 C71.9,580.3 54.4,578.6 42.5,586.0 C51.7,594.6 68.6,599.6 77.0,592.0Z"/><path d="M73.6,590.9 Q60.0,587.5 47.4,586.2 M65.5,588.7 L60.9,584.5 M65.5,588.7 L59.8,590.6 M57.2,587.1 L52.5,583.5 M57.2,587.1 L51.5,589.5" fill="none" stroke="#ffffff" stroke-width="0.75" stroke-linecap="round"/><path d="M116.0,601.0 C116.3,587.8 98.9,576.8 84.5,575.0 C86.4,592.0 101.2,606.1 116.0,601.0Z"/><path d="M112.4,599.0 Q98.7,589.9 88.2,579.5 M103.9,593.8 L101.4,587.3 M103.9,593.8 L96.6,593.1 M96.2,587.8 L94.2,580.6 M96.2,587.8 L89.4,586.4" fill="none" stroke="#ffffff" stroke-width="0.75" stroke-linecap="round"/><path d="M38,503 C34,497 29,496 25.5,499 C29,499 32,501 34,506Z"/><path d="M40,549 C36,543 32,541 28.5,543 C32,544 34,547 36,552Z"/><g transform="translate(286,0) scale(-1,1)"><path d="M115,600 C95,594 78,584 66,566 C54,548 46,528 41,498" fill="none" stroke="#3355c0" stroke-width="3.2" stroke-linecap="round"/><path d="M41.0,500.0 C51.7,493.7 51.4,474.0 46.8,461.5 C30.7,470.9 26.8,490.0 41.0,500.0Z"/><path d="M40.1,495.9 Q39.0,480.0 43.9,466.6 M38.6,486.3 L42.8,481.0 M38.6,486.3 L35.0,479.8 M39.6,476.9 L45.4,471.9 M39.6,476.9 L37.6,470.7" fill="none" stroke="#ffffff" stroke-width="0.75" stroke-linecap="round"/><path d="M44.5,524.0 C56.1,521.3 60.3,504.3 57.5,492.0 C43.1,497.3 35.4,512.8 44.5,524.0Z"/><path d="M45.1,520.5 Q48.7,507.1 54.7,496.1 M46.9,512.3 L51.8,508.7 M46.9,512.3 L45.3,506.1 M49.8,504.5 L55.5,501.3 M49.8,504.5 L49.0,498.6" fill="none" stroke="#ffffff" stroke-width="0.75" stroke-linecap="round"/><path d="M42.5,541.0 C52.4,523.9 38.6,507.8 18.5,506.5 C16.7,523.1 25.9,542.3 42.5,541.0Z"/><path d="M40.9,537.0 Q33.0,522.0 22.9,510.6 M36.5,527.8 L37.4,519.5 M36.5,527.8 L29.0,525.3 M31.0,519.3 L31.0,511.6 M31.0,519.3 L22.7,517.4" fill="none" stroke="#ffffff" stroke-width="0.75" stroke-linecap="round"/><path d="M78.0,580.0 C89.0,565.6 79.4,538.2 65.0,523.7 C54.5,543.9 59.0,572.5 78.0,580.0Z"/><path d="M75.9,574.5 Q69.1,552.4 65.8,531.8 M71.4,561.4 L73.9,551.9 M71.4,561.4 L64.5,554.1 M68.1,547.9 L71.4,538.2 M68.1,547.9 L62.0,540.4" fill="none" stroke="#ffffff" stroke-width="0.75" stroke-linecap="round"/><path d="M57.5,552.0 C66.3,546.3 65.7,532.0 57.5,523.5 C54.1,532.0 52.3,546.3 57.5,552.0Z"/><path d="M58.4,549.1 Q60.5,537.8 58.8,527.5 M60.1,542.3 L62.7,538.0 M60.1,542.3 L58.3,538.0 M60.4,535.5 L62.0,531.2 M60.4,535.5 L57.6,531.2" fill="none" stroke="#ffffff" stroke-width="0.75" stroke-linecap="round"/><path d="M67.0,579.0 C67.1,558.6 43.7,547.3 22.5,552.5 C30.1,570.2 50.6,586.3 67.0,579.0Z"/><path d="M62.9,575.7 Q46.0,563.6 29.3,555.3 M53.0,568.1 L49.1,559.5 M53.0,568.1 L43.9,568.2 M42.4,561.5 L38.1,553.7 M42.4,561.5 L32.9,562.4" fill="none" stroke="#ffffff" stroke-width="0.75" stroke-linecap="round"/><path d="M77.0,592.0 C71.9,580.3 54.4,578.6 42.5,586.0 C51.7,594.6 68.6,599.6 77.0,592.0Z"/><path d="M73.6,590.9 Q60.0,587.5 47.4,586.2 M65.5,588.7 L60.9,584.5 M65.5,588.7 L59.8,590.6 M57.2,587.1 L52.5,583.5 M57.2,587.1 L51.5,589.5" fill="none" stroke="#ffffff" stroke-width="0.75" stroke-linecap="round"/><path d="M116.0,601.0 C116.3,587.8 98.9,576.8 84.5,575.0 C86.4,592.0 101.2,606.1 116.0,601.0Z"/><path d="M112.4,599.0 Q98.7,589.9 88.2,579.5 M103.9,593.8 L101.4,587.3 M103.9,593.8 L96.6,593.1 M96.2,587.8 L94.2,580.6 M96.2,587.8 L89.4,586.4" fill="none" stroke="#ffffff" stroke-width="0.75" stroke-linecap="round"/><path d="M38,503 C34,497 29,496 25.5,499 C29,499 32,501 34,506Z"/><path d="M40,549 C36,543 32,541 28.5,543 C32,544 34,547 36,552Z"/></g><path d="M68.5,595 L43.5,626.6 L133.5,626.6 L133.5,627.4 L152.5,627.4 L152.5,626.6 L241.5,626.6 L216.5,595 L210,595 L231,621 C200,619 170,617 143,620.5 C116,617 86,619 55,621 L76,595Z"/><path d="M57,620.5 C80,612 115,609 143,618.5 C171,609 206,612 229,620.5 C200,619 168,618 143,622 C118,618 86,619 57,620.5Z"/><path d="M71,604.4 H136 M151,604.4 H215.5 M113,595.6 H136 M151,595.6 H172" stroke="#3355c0" stroke-opacity="0.85" stroke-width="1.3" fill="none"/><path d="M62,433 C59,427 64,422 70,422 C74,418 82,418 86,421 C92,421 97,426 96.5,431 C97,435 93,438 90,438.5 C88,441 86,443 85,446 L72,446 C70,443 66,442 64,439 C61,438 61,435 62,433Z" fill="#3355c0"/><path d="M65,432.5 C63,428 67,425 71.5,425 C75,421 81,421 85,424 C90,424 94,427 93.5,430.5 C91,428 88,428.5 86.5,431 C85,434 80,436 76,436 C72,438 68,438.5 66,436.5 C64.5,435.5 64.5,434 65,432.5Z" fill="#ffffff"/><path d="M70.5,428 L75.5,426.5 L74.5,432Z M88,430 C90,429 92,430 92,432 C91,434 89,434 88,433" fill="#3355c0" stroke="#3355c0" stroke-width="0.8"/><path d="M70,441 C76,439.5 82,437 86,434.5" fill="none" stroke="#ffffff" stroke-width="1.3" stroke-linecap="round"/><path d="M72.5,446 L64.5,496.5 C72,492.5 82,493.5 90.5,499 L86.5,446Z" fill="#ffffff" stroke="#3355c0" stroke-width="2" stroke-linejoin="round"/><path d="M76.5,447 L74.5,462 M79.5,447 C80.5,460 79,474 77.5,484 M83,448 L83.5,470" fill="none" stroke="#3355c0" stroke-width="1.5" stroke-linecap="round"/><path d="M64.5,496.5 C72,492.5 82,493.5 90.5,499 C82,497.5 72,497.5 66,501Z" stroke="#3355c0" stroke-width="1"/><path d="M79,497 C83,503 80,510 84,516 C82,522 87,527 84.5,533" fill="none" stroke="#3355c0" stroke-width="3.4" stroke-linecap="round"/><path d="M88,499 C89,510 88,520 90,530" fill="none" stroke="#3355c0" stroke-width="1.4" stroke-linecap="round"/><g transform="translate(286,0) scale(-1,1)"><path d="M62,433 C59,427 64,422 70,422 C74,418 82,418 86,421 C92,421 97,426 96.5,431 C97,435 93,438 90,438.5 C88,441 86,443 85,446 L72,446 C70,443 66,442 64,439 C61,438 61,435 62,433Z" fill="#3355c0"/><path d="M65,432.5 C63,428 67,425 71.5,425 C75,421 81,421 85,424 C90,424 94,427 93.5,430.5 C91,428 88,428.5 86.5,431 C85,434 80,436 76,436 C72,438 68,438.5 66,436.5 C64.5,435.5 64.5,434 65,432.5Z" fill="#ffffff"/><path d="M70.5,428 L75.5,426.5 L74.5,432Z M88,430 C90,429 92,430 92,432 C91,434 89,434 88,433" fill="#3355c0" stroke="#3355c0" stroke-width="0.8"/><path d="M70,441 C76,439.5 82,437 86,434.5" fill="none" stroke="#ffffff" stroke-width="1.3" stroke-linecap="round"/><path d="M72.5,446 L64.5,496.5 C72,492.5 82,493.5 90.5,499 L86.5,446Z" fill="#ffffff" stroke="#3355c0" stroke-width="2" stroke-linejoin="round"/><path d="M76.5,447 L74.5,462 M79.5,447 C80.5,460 79,474 77.5,484 M83,448 L83.5,470" fill="none" stroke="#3355c0" stroke-width="1.5" stroke-linecap="round"/><path d="M64.5,496.5 C72,492.5 82,493.5 90.5,499 C82,497.5 72,497.5 66,501Z" stroke="#3355c0" stroke-width="1"/><path d="M79,497 C83,503 80,510 84,516 C82,522 87,527 84.5,533" fill="none" stroke="#3355c0" stroke-width="3.4" stroke-linecap="round"/><path d="M88,499 C89,510 88,520 90,530" fill="none" stroke="#3355c0" stroke-width="1.4" stroke-linecap="round"/></g><path d="M95.5,470 C95.3,490 93,515 91.2,540 C90.5,548 89.8,554 90.4,560 C91,566 93.5,571 97.2,575.2 C100.5,579 103.5,580.8 106.3,581.9 C111,584 115,585.2 119.5,586.4 C123,587.4 126.5,588.3 129.7,589.4 C134,591 139,594 143,598 C147,594 152,591 156.3,589.4 C159.5,588.3 163,587.4 166.5,586.4 C171,585.2 175,584 179.7,581.9 C182.5,580.8 185.5,579 188.8,575.2 C192.5,571 195,566 195.6,560 C196.2,554 195.5,548 194.8,540 C193,515 190.7,490 190.5,470Z" fill="#ffffff"/><path d="M90.4,560 C91,566 93.5,571 97.2,575.2 C100.5,579 103.5,580.8 106.3,581.9 C111,584 115,585.2 119.5,586.4 C123,587.4 126.5,588.3 129.7,589.4 C134,591 139,594 143,598 C147,594 152,591 156.3,589.4 C159.5,588.3 163,587.4 166.5,586.4 C171,585.2 175,584 179.7,581.9 C182.5,580.8 185.5,579 188.8,575.2 C192.5,571 195,566 195.6,560" fill="none" stroke="#3355c0" stroke-width="4.8" stroke-linejoin="round"/><path d="M95.5,470 C95.3,490 93,515 91.2,540 C90.5,548 89.8,554 90.4,560" fill="none" stroke="#3355c0" stroke-width="6.2"/><path d="M190.5,470 C190.7,490 193,515 194.8,540 C195.5,548 196.2,554 195.6,560" fill="none" stroke="#3355c0" stroke-width="6.2"/><path d="M82,443.5 C95,447 118,448 137,436.8 L143,433 L149,436.8 C168,448 191,447 204,443.5 L199,447 L199,453 L87,453 L87,447Z"/><path d="M90.5,437.8 C103,437 114,433 123.8,424.5" fill="none" stroke="#3355c0" stroke-width="1.6"/><path d="M119,436.6 L128.5,431.8 M123,438.5 L131,434.5" fill="none" stroke="#3355c0" stroke-width="1.3"/><path d="M143,427 L163,424 C172,432 184,437 196,438 L200,444 C180,447 160,443 143,433Z"/><path d="M146,429.5 C158,438 172,442 186,442.5 M152,428.5 C163,436 176,439.5 190,440.3 M158.5,427.5 C168,433.5 180,437 193,438" fill="none" stroke="#ffffff" stroke-width="1.7"/><path d="M143,429 C150,437 165,445 190,445.5" fill="none" stroke="#ffffff" stroke-width="1.6"/><path d="M121.5,413.2 L165,413.2 L164.3,427 L122.2,427Z"/><g fill="none" stroke="#3355c0" stroke-width="2.3" stroke-linecap="round" stroke-linejoin="round"><path d="M114.3,399.3 C114.3,405.5 117.5,410.5 122.5,413.5"/><path d="M114.3,399.2 L117.6,399 C117.2,402.5 118.6,405.3 120.8,405.6 C122.6,405.8 123.3,403.5 122.3,402.3"/><path d="M171.7,399.3 C171.7,405.5 168.5,410.5 163.5,413.5"/><path d="M171.7,399.2 L168.4,399 C168.8,402.5 167.4,405.3 165.2,405.6 C163.4,405.8 162.7,403.5 163.7,402.3"/><path d="M126.5,412.5 C124.5,409 125,405.5 127.2,403.8 C124.8,401 125.6,396.2 128.8,396 C132,396.2 132.6,401 130.4,403.8 C132.8,405.8 133,409.5 131,412.5"/><path d="M159.5,412.5 C161.5,409 161,405.5 158.8,403.8 C161.2,401 160.4,396.2 157.2,396 C154,396.2 153.4,401 155.6,403.8 C153.2,405.8 153,409.5 155,412.5"/><ellipse cx="142.9" cy="402" rx="6.2" ry="6.8"/><path d="M136.2,412.6 C136,409.5 137.5,408 139.5,407.6 M149.6,412.6 C149.8,409.5 148.3,408 146.3,407.6"/><path d="M138.6,393.8 L142.9,390.4 L147.2,393.8 L145.2,396.2 L140.6,396.2Z" stroke-width="1.8"/></g><ellipse cx="142.9" cy="401.6" rx="1.9" ry="3.4"/><path d="M141.6,405 L144.2,405 L145.4,413.5 L140.4,413.5Z"/><path d="M118.8,408.8 L123,413.6 L163,413.6 L167.2,408.8 C164,411 160,410.6 157.5,409.6 C153,411 149,410.6 146,409.8 L139.8,409.8 C137,410.6 133,411 128.5,409.6 C126,410.6 122,411 118.8,408.8Z"/><rect x="124.2" y="415.4" width="16.2" height="5.4" fill="#ffffff"/><path d="M126,418.2 h12.5" stroke="#3355c0" stroke-opacity="0.6" stroke-width="2" stroke-dasharray="1.6 1.1" fill="none"/><g fill="#ffffff"><circle cx="142.9" cy="418" r="1.05"/><circle cx="148.7" cy="418" r="1.05"/><rect x="152.6" y="416.4" width="5.2" height="3.4" rx="1.4"/></g><path d="M124.3,423.6 C136,419.8 150,420.2 160.8,424.8" fill="none" stroke="#ffffff" stroke-width="1"/><rect x="87" y="453" width="112" height="2.6" fill="#ffffff"/><rect x="91.5" y="455.6" width="103.5" height="25.4"/><rect x="95.8" y="459.3" width="95.2" height="18.2" fill="#e2231e"/><g fill="none" stroke="#3355c0" stroke-width="0.9"><path d="M101,470 C99,466 104,463 110,464 C118,465 113,473 107,472 M109,464.5 C118,463 124,464 127,467 M117,464 C114,468 113,471 109,473"/><path d="M122,466 C126,463 131,464 130,467 C129,469 126,469 125,468.5 C130,468 132,471 129,473 C126,474.5 122,473.5 121,471.5"/><ellipse cx="143" cy="468.5" rx="7" ry="4.6"/><ellipse cx="143" cy="468.5" rx="3.2" ry="2.2"/><path d="M152,473 C155,469 157,466 159,463.5 L162,471 L167,463.5 L168.5,473"/><path d="M170,473 C174,469 177,466 180,463.5 L181,473 M173.5,470 H184 C187,470 187,466.5 184,467.5"/></g><text x="120.8" y="532.3" font-family="Liberation Serif,serif" font-weight="bold" font-size="67" stroke="#3355c0" stroke-width="1.7" text-anchor="middle" textLength="30.5" lengthAdjust="spacingAndGlyphs">Є</text><text x="164.3" y="532.3" font-family="Liberation Serif,serif" font-weight="bold" font-size="67" stroke="#3355c0" stroke-width="1.7" text-anchor="middle" textLength="37" lengthAdjust="spacingAndGlyphs">У</text><path d="M107.7,536.3 C125,538.6 160,538.6 177.6,536.3 L172.5,541.8 L113,541.8Z"/><path d="M134,541.5 L134,557.5 C134,561.5 131.5,563.6 127.5,563.6 L123.2,563.6 L123.2,568.2 L163.3,568.2 L163.3,563.6 L159,563.6 C155,563.6 152.5,561.5 152.5,557.5 L152.5,541.5" fill="#ffffff" stroke="#3355c0" stroke-width="3" stroke-linejoin="round"/><path d="M113,541 C116,542.3 117.6,544.5 117.2,547.8 C118.8,551 122.8,551 124.8,548.6 C126.8,546 130,544.6 134,544.6 M173,541 C170,542.3 168.4,544.5 168.8,547.8 C167.2,551 163.2,551 161.2,548.6 C159.2,546 156,544.6 152.5,544.6" fill="none" stroke="#3355c0" stroke-width="2.4" stroke-linecap="round"/><text x="143.2" y="583.3" font-family="Liberation Sans,sans-serif" font-size="13.6" font-weight="bold" text-anchor="middle" textLength="31" lengthAdjust="spacingAndGlyphs">1991</text></g></symbol></svg>
<svg class="emb" style="left:0;top:340px" width="290" height="300"><use href="#emb"/></svg>
<svg class="emb" style="left:1620px;top:340px" width="290" height="300"><use href="#emb"/></svg>
</body>
</html>
